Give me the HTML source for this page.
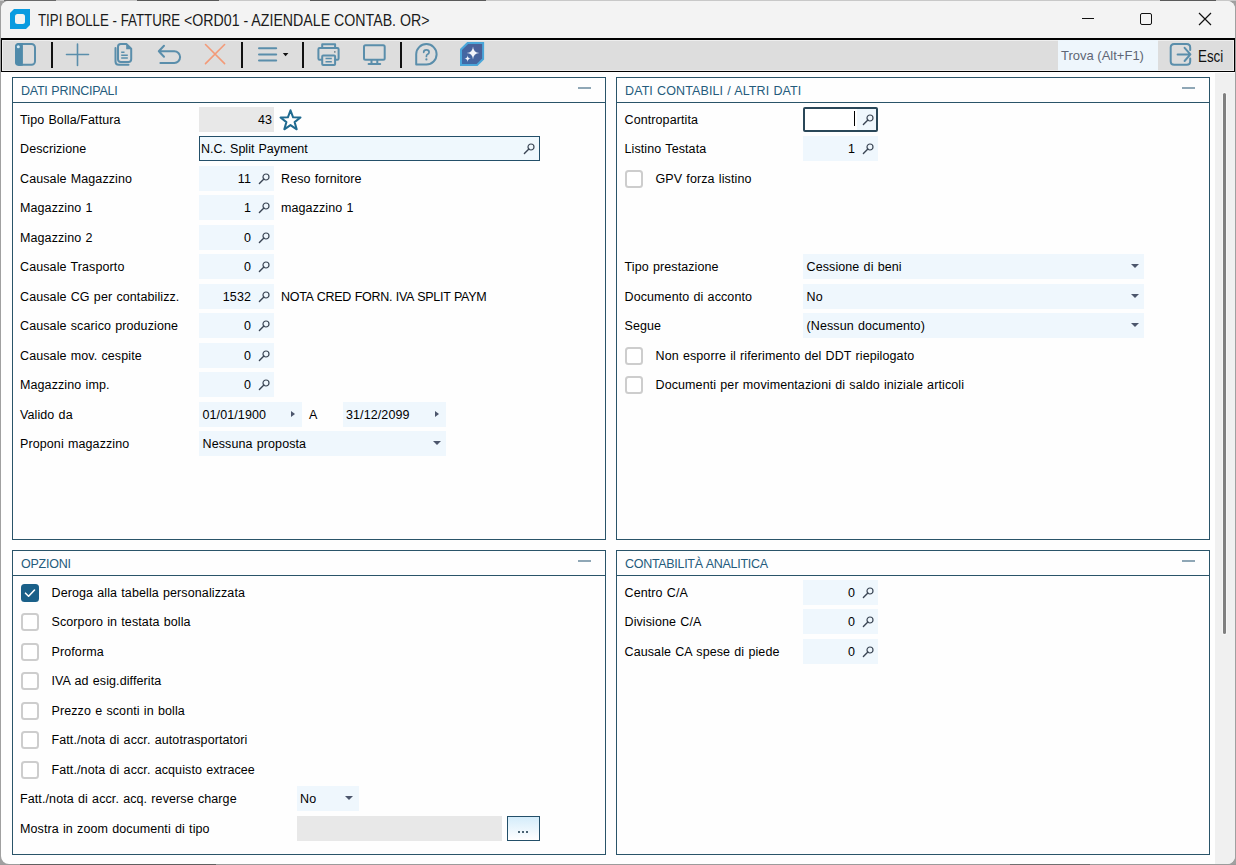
<!DOCTYPE html>
<html><head><meta charset="utf-8">
<style>
*{box-sizing:border-box;margin:0;padding:0}
html,body{width:1236px;height:865px;overflow:hidden;background:#a0a0a0;font-family:"Liberation Sans",sans-serif}
.a{position:absolute}
#bgtop{left:0;top:0;width:1236px;height:1px;background:#c8c8c8}
#win{left:1px;top:1px;width:1234px;height:863px;background:#fefefe;border-radius:8px;overflow:hidden}
#title{left:1px;top:1px;width:1234px;height:37px;background:#f3f3f3;border-radius:8px 8px 0 0}
.t{position:absolute;white-space:pre;line-height:1;color:#000}
#tb{left:1px;top:38px;width:1234px;height:34px;background:#dddddd;border-top:2px solid #000;border-bottom:1px solid #000;border-right:1px solid #000;border-left:1px solid #000;box-shadow:inset 1px 1px 0 #eeeeee,inset -1px -1px 0 #eeeeee}
.sep{position:absolute;top:42px;width:2px;height:26px;background:#111}
.panel{position:absolute;border:1px solid #2a5469}
.ph{position:absolute;left:0;top:0;right:0;height:25px;border-bottom:1px solid #2a5469}
.pht{position:absolute;left:8px;top:8px;font-size:12.5px;color:#1f6791;white-space:pre;line-height:1}
.pmin{position:absolute;top:9px;width:13px;height:2px;background:#8fa7b6}
.l{position:absolute;font-size:12.5px;letter-spacing:0.1px;word-spacing:0.6px;white-space:pre;line-height:1;color:#000}
.f{position:absolute;background:#eff7fd;height:25px}
.g{position:absolute;background:#e8e8e8;height:25px}
.cb{position:absolute;width:17.5px;height:17.5px;border:2px solid #cdcdcd;border-radius:3.5px;background:#fff}
.v{position:absolute;font-size:12.8px;white-space:pre;line-height:1;color:#111;text-align:right}
.mg{position:absolute;width:11px;height:11px}
.dd{position:absolute;width:0;height:0;border-left:4px solid transparent;border-right:4px solid transparent;border-top:4px solid #4c566c}
.ar{position:absolute;width:0;height:0;border-top:3.7px solid transparent;border-bottom:3.7px solid transparent;border-left:4.6px solid #4c566c}
</style></head><body>
<div id="bgtop" class="a"></div>
<div class="a" style="left:4px;top:0;width:52px;height:1px;background:#6a6a6a"></div>
<div class="a" style="left:137px;top:0;width:82px;height:1px;background:#5a5a5a"></div>
<div class="a" style="left:310px;top:0;width:176px;height:1px;background:#5a5a5a"></div>
<div class="a" style="left:1160px;top:0;width:56px;height:1px;background:#5a5a5a"></div>
<div class="a" style="left:0;top:864px;width:1236px;height:1px;background:#9c9c9c"></div>
<div class="a" style="left:20px;top:864px;width:196px;height:1px;background:#606060"></div>
<div class="a" style="left:1010px;top:864px;width:80px;height:1px;background:#707070"></div>
<div id="win" class="a"></div>
<div id="title" class="a"></div>
<!-- app icon -->
<svg class="a" style="left:10px;top:9px" width="21" height="21" viewBox="0 0 21 21">
  <path d="M4,0 H20 V16 L16,20 H0 V4 Z" fill="#0a9be0"/>
  <rect x="5" y="5" width="10" height="10" rx="2.5" fill="#f3f3f3"/>
</svg>
<div class="t" style="left:37.5px;top:13px;font-size:16px;transform:scaleX(0.83);transform-origin:0 0;color:#1a1a1a">TIPI BOLLE - FATTURE</div>
<div class="t" style="left:184px;top:13px;font-size:16px;transform:scaleX(0.886);transform-origin:0 0;color:#1a1a1a">&lt;ORD01 - AZIENDALE CONTAB. OR&gt;</div>
<!-- window controls -->
<div class="a" style="left:1082px;top:18px;width:12px;height:1px;background:#111"></div>
<div class="a" style="left:1140px;top:13px;width:12px;height:12px;border:1.2px solid #111;border-radius:2px"></div>
<svg class="a" style="left:1198px;top:12px" width="14" height="14" viewBox="0 0 14 14">
  <path d="M1,1 L13,13 M13,1 L1,13" stroke="#111" stroke-width="1.2"/>
</svg>
<!-- toolbar -->
<div id="tb" class="a"></div>
<svg class="a" style="left:0;top:38px" width="500" height="34" viewBox="0 38 500 34">
  <g fill="none" stroke="#5a8eab" stroke-width="2" stroke-linecap="round" stroke-linejoin="round">
    <!-- sidebar -->
    <rect x="16" y="44" width="19" height="20.7" rx="3.5"/>
    <!-- plus -->
    <path d="M77.5,44 V65.5 M66.5,54.5 H88.5" stroke-width="1.6"/>
    <!-- copy -->
    <path d="M115.5,48 V61.5 Q115.5,64.7 118.7,64.7 H128.5" />
    <path d="M118,46.8 Q118,44.1 120.8,44.1 H126.6 L131.2,48.8 V59.2 Q131.2,61.9 128.5,61.9 H120.8 Q118,61.9 118,59.2 Z"/>
    <path d="M121.2,52.3 H124.5 M121.2,55.3 H127.8 M121.2,58 H127.8" stroke-width="1.4" stroke-linecap="butt"/>
    <!-- undo -->
    <path d="M164,45.7 L158.8,51.3 L164,56.8 M158.8,51.3 H174.3 A5.8,5.8 0 0 1 174.3,62.9 H160.4"/>
    <!-- menu -->
    <path d="M259,48.2 H276.2 M259,54.5 H276.2 M259,60.5 H276.2"/>
    <!-- printer -->
    <path d="M322.2,47.8 V44.2 H335.1 V47.8"/>
    <path d="M322,59.7 H319.6 Q318.4,59.7 318.4,58.5 V49.2 Q318.4,48 319.6,48 H337.4 Q338.6,48 338.6,49.2 V58.5 Q338.6,59.7 337.4,59.7 H335.2"/>
    <rect x="322.2" y="55.5" width="12.9" height="9.4" rx="1"/>
    <path d="M325.5,58.5 H331.8 M325.5,61.8 H331.8" stroke-width="1.4" stroke-linecap="butt"/>
    <!-- monitor -->
    <rect x="364" y="45.2" width="20.7" height="14.6" rx="1.5"/>
    <path d="M371.5,60.5 V63.2 M377.3,60.5 V63.2 M368.6,64 H380.2"/>
    <!-- help bubble -->
    <path d="M416.2,64.5 V54.3 A10.2,10.2 0 1 1 426.4,64.5 Z"/>
    <path d="M423.7,52.3 Q423.7,49.9 426.4,49.9 Q429.1,49.9 429.1,52.3 Q429.1,53.7 427.3,54.5 Q426.4,54.9 426.4,56.4" stroke-width="1.7"/>
  </g>
  <!-- sidebar fill -->
  <rect x="15" y="43" width="7.7" height="22.7" rx="3.5" fill="#4f8aaa"/>
  <rect x="18.5" y="43" width="4.2" height="22.7" fill="#4f8aaa"/>
  <circle cx="18.3" cy="46.8" r="1.5" fill="#d6eaf5"/>
  <!-- copy fold -->
  <path d="M126.2,44.2 L131.4,49.2 H126.2 Z" fill="#5a8eab"/>
  <!-- printer dot -->
  <rect x="334.1" y="51.2" width="1.4" height="1.4" fill="#5a6e7a"/>
  <!-- help dot -->
  <circle cx="426.4" cy="59.4" r="1.1" fill="#5a8eab"/>
  <!-- X -->
  <path d="M205.5,44.5 L224.6,63.6 M224.6,44.5 L205.5,63.6" stroke="#f39a78" stroke-width="1.6" stroke-linecap="round"/>
  <!-- caret -->
  <path d="M282.8,53 H288.4 L285.6,56.2 Z" fill="#111"/>
  <!-- AI badge -->
  <defs><linearGradient id="aig" x1="0" y1="1" x2="1" y2="0"><stop offset="0" stop-color="#3f6aa8"/><stop offset="1" stop-color="#4d5e94"/></linearGradient></defs>
  <path d="M467.2,42 H484.1 V59.4 L477.5,66 H460 V49.1 Z" fill="#4aa6d9"/>
  <path d="M468.1,44 H482.1 V58.5 L476.6,64 H462 V49.9 Z" fill="url(#aig)"/>
  <path d="M473,46.4 Q473.4,52.5 479.4,52.9 Q473.4,53.3 473,59.4 Q472.6,53.3 466.6,52.9 Q472.6,52.5 473,46.4 Z" fill="#f2f4fa"/>
  <path d="M467.6,55.2 Q467.8,58.4 470.9,58.6 Q467.8,58.8 467.6,62 Q467.4,58.8 464.3,58.6 Q467.4,58.4 467.6,55.2 Z" fill="#f2f4fa"/>
</svg>
<div class="sep" style="left:51px"></div>
<div class="sep" style="left:241px"></div>
<div class="sep" style="left:302px"></div>
<div class="sep" style="left:400px"></div>
<!-- search box -->
<div class="a" style="left:1058px;top:40px;width:100px;height:31px;background:#eef6fc"></div>
<div class="t" style="left:1061px;top:49px;font-size:13px;color:#5f6675">Trova (Alt+F1)</div>
<svg class="a" style="left:1164px;top:40px" width="32" height="30" viewBox="1164 40 32 30">
  <g fill="none" stroke="#5a8eab" stroke-width="2" stroke-linecap="round" stroke-linejoin="round">
    <path d="M1190.2,50 V47.4 Q1190.2,43.9 1186.7,43.9 H1174.2 Q1170.7,43.9 1170.7,47.4 V61.3 Q1170.7,64.8 1174.2,64.8 H1186.7 Q1190.2,64.8 1190.2,61.3 V58.5"/>
    <path d="M1177.6,54.4 H1190 M1184.6,47.8 L1190.4,54.4 L1184.6,61"/>
  </g>
</svg>
<div class="t" style="left:1198px;top:49.1px;font-size:16px;transform:scaleX(0.835);transform-origin:0 0;color:#111">Esci</div>
<div class="panel" style="left:12px;top:77px;width:594px;height:463px"><div class="ph"></div></div>
<div class="l" style="left:21px;top:84.75px;letter-spacing:-0.25px;color:#245b7c">DATI PRINCIPALI</div>
<div class="pmin" style="left:578px;top:87px"></div>
<div class="panel" style="left:616px;top:77px;width:594px;height:463px"><div class="ph"></div></div>
<div class="l" style="left:625px;top:84.75px;color:#245b7c">DATI CONTABILI / ALTRI DATI</div>
<div class="pmin" style="left:1182px;top:87px"></div>
<div class="panel" style="left:12px;top:550px;width:594px;height:305px"><div class="ph"></div></div>
<div class="l" style="left:21px;top:557.75px;letter-spacing:-0.25px;color:#245b7c">OPZIONI</div>
<div class="pmin" style="left:578px;top:560px"></div>
<div class="panel" style="left:616px;top:550px;width:594px;height:305px"><div class="ph"></div></div>
<div class="l" style="left:625px;top:557.75px;letter-spacing:-0.3px;color:#245b7c">CONTABILIT&Agrave; ANALITICA</div>
<div class="pmin" style="left:1182px;top:560px"></div>
<div class="l" style="left:20px;top:113.75px">Tipo Bolla/Fattura</div>
<div class="l" style="left:20px;top:142.75px">Descrizione</div>
<div class="l" style="left:20px;top:172.75px">Causale Magazzino</div>
<div class="l" style="left:20px;top:201.75px">Magazzino 1</div>
<div class="l" style="left:20px;top:231.75px">Magazzino 2</div>
<div class="l" style="left:20px;top:260.75px">Causale Trasporto</div>
<div class="l" style="left:20px;top:290.75px">Causale CG per contabilizz.</div>
<div class="l" style="left:20px;top:319.75px">Causale scarico produzione</div>
<div class="l" style="left:20px;top:349.75px">Causale mov. cespite</div>
<div class="l" style="left:20px;top:378.75px">Magazzino imp.</div>
<div class="l" style="left:20px;top:408.75px">Valido da</div>
<div class="l" style="left:20px;top:437.75px">Proponi magazzino</div>
<div class="g" style="left:199px;top:107px;width:75px"></div>
<div class="l" style="right:964px;top:113.75px">43</div>
<svg class="a" style="left:278px;top:107.8px" width="25" height="25" viewBox="0 0 25 25"><path d="M12.5,2.3 L15.1,9.3 L22.5,9.5 L16.6,14.1 L18.7,21.3 L12.5,17.1 L6.3,21.3 L8.4,14.1 L2.5,9.5 L9.9,9.3 Z" fill="none" stroke="#1f6a90" stroke-width="2" stroke-linejoin="round"/></svg>
<div class="a" style="left:199px;top:136px;width:341px;height:25px;background:#eff8fd;border:1px solid #234f69"></div>
<div class="l" style="left:201px;top:142.75px;letter-spacing:0px">N.C. Split Payment</div>
<svg class="a" style="left:523px;top:143px" width="12" height="12" viewBox="0 0 12 12"><circle cx="8" cy="4" r="3" fill="none" stroke="#3c4756" stroke-width="1.2"/><path d="M5.9,6.1 L1.4,10.6" stroke="#3c4756" stroke-width="1.4" stroke-linecap="round"/></svg>
<div class="f" style="left:199px;top:166px;width:75px"></div>
<div class="l" style="right:985px;top:172.75px">11</div>
<svg class="a" style="left:258px;top:173px" width="12" height="12" viewBox="0 0 12 12"><circle cx="8" cy="4" r="3" fill="none" stroke="#3c4756" stroke-width="1.2"/><path d="M5.9,6.1 L1.4,10.6" stroke="#3c4756" stroke-width="1.4" stroke-linecap="round"/></svg>
<div class="l" style="left:281px;top:172.75px">Reso fornitore</div>
<div class="f" style="left:199px;top:195px;width:75px"></div>
<div class="l" style="right:985px;top:201.75px">1</div>
<svg class="a" style="left:258px;top:202px" width="12" height="12" viewBox="0 0 12 12"><circle cx="8" cy="4" r="3" fill="none" stroke="#3c4756" stroke-width="1.2"/><path d="M5.9,6.1 L1.4,10.6" stroke="#3c4756" stroke-width="1.4" stroke-linecap="round"/></svg>
<div class="l" style="left:281px;top:201.75px">magazzino 1</div>
<div class="f" style="left:199px;top:225px;width:75px"></div>
<div class="l" style="right:985px;top:231.75px">0</div>
<svg class="a" style="left:258px;top:232px" width="12" height="12" viewBox="0 0 12 12"><circle cx="8" cy="4" r="3" fill="none" stroke="#3c4756" stroke-width="1.2"/><path d="M5.9,6.1 L1.4,10.6" stroke="#3c4756" stroke-width="1.4" stroke-linecap="round"/></svg>
<div class="f" style="left:199px;top:254px;width:75px"></div>
<div class="l" style="right:985px;top:260.75px">0</div>
<svg class="a" style="left:258px;top:261px" width="12" height="12" viewBox="0 0 12 12"><circle cx="8" cy="4" r="3" fill="none" stroke="#3c4756" stroke-width="1.2"/><path d="M5.9,6.1 L1.4,10.6" stroke="#3c4756" stroke-width="1.4" stroke-linecap="round"/></svg>
<div class="f" style="left:199px;top:284px;width:75px"></div>
<div class="l" style="right:985px;top:290.75px">1532</div>
<svg class="a" style="left:258px;top:291px" width="12" height="12" viewBox="0 0 12 12"><circle cx="8" cy="4" r="3" fill="none" stroke="#3c4756" stroke-width="1.2"/><path d="M5.9,6.1 L1.4,10.6" stroke="#3c4756" stroke-width="1.4" stroke-linecap="round"/></svg>
<div class="l" style="left:281px;top:290.75px;letter-spacing:-0.3px">NOTA CRED FORN. IVA SPLIT PAYM</div>
<div class="f" style="left:199px;top:313px;width:75px"></div>
<div class="l" style="right:985px;top:319.75px">0</div>
<svg class="a" style="left:258px;top:320px" width="12" height="12" viewBox="0 0 12 12"><circle cx="8" cy="4" r="3" fill="none" stroke="#3c4756" stroke-width="1.2"/><path d="M5.9,6.1 L1.4,10.6" stroke="#3c4756" stroke-width="1.4" stroke-linecap="round"/></svg>
<div class="f" style="left:199px;top:343px;width:75px"></div>
<div class="l" style="right:985px;top:349.75px">0</div>
<svg class="a" style="left:258px;top:350px" width="12" height="12" viewBox="0 0 12 12"><circle cx="8" cy="4" r="3" fill="none" stroke="#3c4756" stroke-width="1.2"/><path d="M5.9,6.1 L1.4,10.6" stroke="#3c4756" stroke-width="1.4" stroke-linecap="round"/></svg>
<div class="f" style="left:199px;top:372px;width:75px"></div>
<div class="l" style="right:985px;top:378.75px">0</div>
<svg class="a" style="left:258px;top:379px" width="12" height="12" viewBox="0 0 12 12"><circle cx="8" cy="4" r="3" fill="none" stroke="#3c4756" stroke-width="1.2"/><path d="M5.9,6.1 L1.4,10.6" stroke="#3c4756" stroke-width="1.4" stroke-linecap="round"/></svg>
<div class="f" style="left:199px;top:402px;width:103px"></div>
<div class="l" style="left:202.5px;top:408.75px">01/01/1900</div>
<div class="ar" style="left:290.7px;top:410.7px"></div>
<div class="l" style="left:309px;top:408.75px">A</div>
<div class="f" style="left:343px;top:402px;width:103px"></div>
<div class="l" style="left:346px;top:408.75px">31/12/2099</div>
<div class="ar" style="left:434.7px;top:410.7px"></div>
<div class="f" style="left:199px;top:431px;width:247px"></div>
<div class="l" style="left:202.5px;top:437.75px">Nessuna proposta</div>
<div class="dd" style="left:432.5px;top:441px"></div>
<div class="l" style="left:624.5px;top:113.75px">Contropartita</div>
<div class="a" style="left:803px;top:107px;width:75px;height:25px;background:#fff;border:2px solid #2a4758;border-radius:2px"></div>
<div class="a" style="left:857px;top:109px;width:19px;height:21px;background:#eff7fd"></div>
<div class="a" style="left:854px;top:111px;width:1px;height:15px;background:#000"></div>
<svg class="a" style="left:862px;top:114px" width="12" height="12" viewBox="0 0 12 12"><circle cx="8" cy="4" r="3" fill="none" stroke="#3c4756" stroke-width="1.2"/><path d="M5.9,6.1 L1.4,10.6" stroke="#3c4756" stroke-width="1.4" stroke-linecap="round"/></svg>
<div class="l" style="left:624.5px;top:142.75px">Listino Testata</div>
<div class="f" style="left:803px;top:136px;width:75px"></div>
<div class="l" style="right:381px;top:142.75px">1</div>
<svg class="a" style="left:862px;top:143px" width="12" height="12" viewBox="0 0 12 12"><circle cx="8" cy="4" r="3" fill="none" stroke="#3c4756" stroke-width="1.2"/><path d="M5.9,6.1 L1.4,10.6" stroke="#3c4756" stroke-width="1.4" stroke-linecap="round"/></svg>
<div class="cb" style="left:625px;top:170px"></div>
<div class="l" style="left:655.5px;top:172.75px">GPV forza listino</div>
<div class="l" style="left:624.5px;top:260.75px">Tipo prestazione</div>
<div class="f" style="left:803px;top:254px;width:341px"></div>
<div class="l" style="left:806.5px;top:260.75px">Cessione di beni</div>
<div class="dd" style="left:1130.5px;top:264px"></div>
<div class="l" style="left:624.5px;top:290.75px">Documento di acconto</div>
<div class="f" style="left:803px;top:284px;width:341px"></div>
<div class="l" style="left:806.5px;top:290.75px">No</div>
<div class="dd" style="left:1130.5px;top:294px"></div>
<div class="l" style="left:624.5px;top:319.75px">Segue</div>
<div class="f" style="left:803px;top:313px;width:341px"></div>
<div class="l" style="left:806.5px;top:319.75px">(Nessun documento)</div>
<div class="dd" style="left:1130.5px;top:323px"></div>
<div class="cb" style="left:625px;top:347px"></div>
<div class="l" style="left:655.5px;top:349.75px">Non esporre il riferimento del DDT riepilogato</div>
<div class="cb" style="left:625px;top:376px"></div>
<div class="l" style="left:655.5px;top:378.75px">Documenti per movimentazioni di saldo iniziale articoli</div>
<div class="a" style="left:21px;top:584px;width:17.5px;height:17.5px;border-radius:3.5px;background:#1a6089"></div>
<svg class="a" style="left:21px;top:584px" width="18" height="18" viewBox="0 0 18 18"><path d="M4.5,9.2 L7.6,12.2 L13.5,6" fill="none" stroke="#fff" stroke-width="1.6" stroke-linecap="round" stroke-linejoin="round"/></svg>
<div class="l" style="left:51.5px;top:586.75px">Deroga alla tabella personalizzata</div>
<div class="cb" style="left:21px;top:613px"></div>
<div class="l" style="left:51.5px;top:615.75px">Scorporo in testata bolla</div>
<div class="cb" style="left:21px;top:643px"></div>
<div class="l" style="left:51.5px;top:645.75px">Proforma</div>
<div class="cb" style="left:21px;top:672px"></div>
<div class="l" style="left:51.5px;top:674.75px">IVA ad esig.differita</div>
<div class="cb" style="left:21px;top:702px"></div>
<div class="l" style="left:51.5px;top:704.75px">Prezzo e sconti in bolla</div>
<div class="cb" style="left:21px;top:731px"></div>
<div class="l" style="left:51.5px;top:733.75px">Fatt./nota di accr. autotrasportatori</div>
<div class="cb" style="left:21px;top:761px"></div>
<div class="l" style="left:51.5px;top:763.75px">Fatt./nota di accr. acquisto extracee</div>
<div class="l" style="left:20px;top:792.75px">Fatt./nota di accr. acq. reverse charge</div>
<div class="f" style="left:297px;top:786px;width:62px"></div>
<div class="l" style="left:300px;top:792.75px">No</div>
<div class="dd" style="left:344.5px;top:796px"></div>
<div class="l" style="left:20px;top:822.75px">Mostra in zoom documenti di tipo</div>
<div class="g" style="left:297px;top:816px;width:205px"></div>
<div class="a" style="left:507px;top:816px;width:33px;height:25px;border:1px solid #234f69;background:linear-gradient(#d4ecfa,#ffffff)"></div>
<div class="a" style="left:518px;top:831px;width:2px;height:2px;background:#4a6474"></div>
<div class="a" style="left:522px;top:831px;width:2px;height:2px;background:#4a6474"></div>
<div class="a" style="left:526px;top:831px;width:2px;height:2px;background:#4a6474"></div>
<div class="l" style="left:624.5px;top:586.75px">Centro C/A</div>
<div class="f" style="left:803px;top:580px;width:75px"></div>
<div class="l" style="right:381px;top:586.75px">0</div>
<svg class="a" style="left:862px;top:587px" width="12" height="12" viewBox="0 0 12 12"><circle cx="8" cy="4" r="3" fill="none" stroke="#3c4756" stroke-width="1.2"/><path d="M5.9,6.1 L1.4,10.6" stroke="#3c4756" stroke-width="1.4" stroke-linecap="round"/></svg>
<div class="l" style="left:624.5px;top:615.75px">Divisione C/A</div>
<div class="f" style="left:803px;top:609px;width:75px"></div>
<div class="l" style="right:381px;top:615.75px">0</div>
<svg class="a" style="left:862px;top:616px" width="12" height="12" viewBox="0 0 12 12"><circle cx="8" cy="4" r="3" fill="none" stroke="#3c4756" stroke-width="1.2"/><path d="M5.9,6.1 L1.4,10.6" stroke="#3c4756" stroke-width="1.4" stroke-linecap="round"/></svg>
<div class="l" style="left:624.5px;top:645.75px">Causale CA spese di piede</div>
<div class="f" style="left:803px;top:639px;width:75px"></div>
<div class="l" style="right:381px;top:645.75px">0</div>
<svg class="a" style="left:862px;top:646px" width="12" height="12" viewBox="0 0 12 12"><circle cx="8" cy="4" r="3" fill="none" stroke="#3c4756" stroke-width="1.2"/><path d="M5.9,6.1 L1.4,10.6" stroke="#3c4756" stroke-width="1.4" stroke-linecap="round"/></svg><!-- scrollbar -->
<div class="a" style="left:1215px;top:73px;width:20px;height:791px;background:#f0f0f0;border-bottom-right-radius:8px"></div>
<div class="a" style="left:1222px;top:92px;width:5px;height:543px;border-radius:2.5px;background:#f7f7f7"></div>
<div class="a" style="left:1223px;top:93px;width:3px;height:541px;border-radius:1.5px;background:#808080"></div>
</body></html>
